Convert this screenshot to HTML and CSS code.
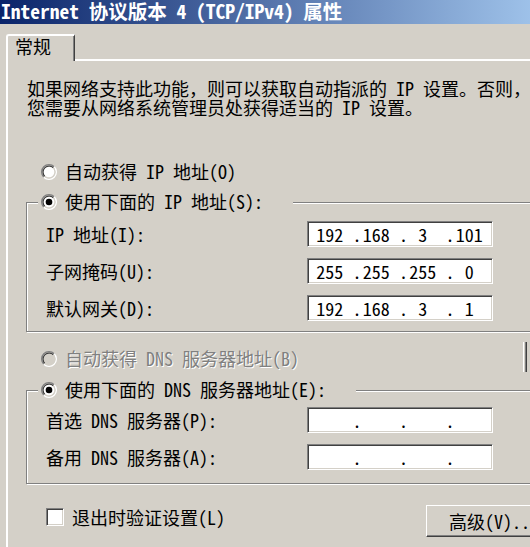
FILE: index.html
```html
<!DOCTYPE html>
<html lang="zh-CN">
<head>
<meta charset="utf-8">
<title>Internet 协议版本 4 (TCP/IPv4) 属性</title>
<link rel="stylesheet" href="styles.css">
</head>
<body>
<div class="window">
  <div class="titlebar"><span class="title">Internet 协议版本 4 (TCP/IPv4) 属性</span></div>
  <div class="tabstrip">
    <div class="tab">常规</div>
    <div class="tab-fill"></div>
  </div>
  <div class="panel">
    <p class="intro">如果网络支持此功能，则可以获取自动指派的 IP 设置。否则，<br>您需要从网络系统管理员处获得适当的 IP 设置。</p>

    <div class="option">
      <svg class="radio" viewBox="0 0 12 12"><path d="M2.11 9.89A5.5 5.5 0 0 1 9.89 2.11" stroke="#808080" fill="none"/><path d="M9.89 2.11A5.5 5.5 0 0 1 2.11 9.89" stroke="#fff" fill="none"/><path d="M2.82 9.18A4.5 4.5 0 0 1 9.18 2.82" stroke="#404040" fill="none"/><path d="M9.18 2.82A4.5 4.5 0 0 1 2.82 9.18" stroke="#d4d0c8" fill="none"/><circle cx="6" cy="6" r="4" fill="#fff"/></svg>
      <span class="label">自动获得 IP 地址(O)</span>
    </div>

    <div class="group group-ip">
      <div class="legend">
        <svg class="radio" viewBox="0 0 12 12"><path d="M2.11 9.89A5.5 5.5 0 0 1 9.89 2.11" stroke="#808080" fill="none"/><path d="M9.89 2.11A5.5 5.5 0 0 1 2.11 9.89" stroke="#fff" fill="none"/><path d="M2.82 9.18A4.5 4.5 0 0 1 9.18 2.82" stroke="#404040" fill="none"/><path d="M9.18 2.82A4.5 4.5 0 0 1 2.82 9.18" stroke="#d4d0c8" fill="none"/><circle cx="6" cy="6" r="4" fill="#fff"/><circle cx="6" cy="6" r="2.5" fill="#000"/></svg>
        <span class="label">使用下面的 IP 地址(S):</span>
      </div>
      <div class="rows rows-ip">
        <div class="field-row">
          <span class="field-label">IP 地址(I):</span>
          <div class="ip"><span class="oct">192</span><span class="dot">.</span><span class="oct">168</span><span class="dot">.</span><span class="oct">3</span><span class="dot">.</span><span class="oct">101</span></div>
        </div>
        <div class="field-row">
          <span class="field-label">子网掩码(U):</span>
          <div class="ip"><span class="oct">255</span><span class="dot">.</span><span class="oct">255</span><span class="dot">.</span><span class="oct">255</span><span class="dot">.</span><span class="oct">0</span></div>
        </div>
        <div class="field-row">
          <span class="field-label">默认网关(D):</span>
          <div class="ip"><span class="oct">192</span><span class="dot">.</span><span class="oct">168</span><span class="dot">.</span><span class="oct">3</span><span class="dot">.</span><span class="oct">1</span></div>
        </div>
      </div>
    </div>

    <div class="option option-disabled">
      <svg class="radio" viewBox="0 0 12 12"><path d="M2.11 9.89A5.5 5.5 0 0 1 9.89 2.11" stroke="#808080" fill="none"/><path d="M9.89 2.11A5.5 5.5 0 0 1 2.11 9.89" stroke="#fff" fill="none"/><path d="M2.82 9.18A4.5 4.5 0 0 1 9.18 2.82" stroke="#404040" fill="none"/><path d="M9.18 2.82A4.5 4.5 0 0 1 2.82 9.18" stroke="#d4d0c8" fill="none"/><circle cx="6" cy="6" r="4" fill="#d4d0c8"/></svg>
      <span class="label">自动获得 DNS 服务器地址(B)</span>
      <span class="edge"></span>
    </div>

    <div class="group group-dns">
      <div class="legend">
        <svg class="radio" viewBox="0 0 12 12"><path d="M2.11 9.89A5.5 5.5 0 0 1 9.89 2.11" stroke="#808080" fill="none"/><path d="M9.89 2.11A5.5 5.5 0 0 1 2.11 9.89" stroke="#fff" fill="none"/><path d="M2.82 9.18A4.5 4.5 0 0 1 9.18 2.82" stroke="#404040" fill="none"/><path d="M9.18 2.82A4.5 4.5 0 0 1 2.82 9.18" stroke="#d4d0c8" fill="none"/><circle cx="6" cy="6" r="4" fill="#fff"/><circle cx="6" cy="6" r="2.5" fill="#000"/></svg>
        <span class="label">使用下面的 DNS 服务器地址(E):</span>
      </div>
      <div class="rows rows-dns">
        <div class="field-row">
          <span class="field-label">首选 DNS 服务器(P):</span>
          <div class="ip"><span class="oct"></span><span class="dot">.</span><span class="oct"></span><span class="dot">.</span><span class="oct"></span><span class="dot">.</span><span class="oct"></span></div>
        </div>
        <div class="field-row">
          <span class="field-label">备用 DNS 服务器(A):</span>
          <div class="ip"><span class="oct"></span><span class="dot">.</span><span class="oct"></span><span class="dot">.</span><span class="oct"></span><span class="dot">.</span><span class="oct"></span></div>
        </div>
      </div>
    </div>

    <div class="footer">
      <span class="check"></span>
      <span class="check-label">退出时验证设置(L)</span>
      <div class="button">高级(V)...</div>
    </div>
  </div>
</div>
</body>
</html>
```

FILE: styles.css
```css
html, body {
  margin: 0;
  padding: 0;
}
body {
  width: 530px;
  height: 547px;
  overflow: hidden;
  background: #d4d0c8;
  color: #000;
  font-family: "Noto Sans Mono CJK SC", "Noto Sans CJK SC", "Liberation Mono", monospace;
  font-size: 18px;
}
.window {
  width: 560px;
  height: 547px;
  background: #d4d0c8;
}
.titlebar {
  height: 24px;
  background: linear-gradient(to right, #0a246a 0, #a6caf0 560px);
  overflow: hidden;
}
.title {
  display: block;
  padding-left: 1px;
  line-height: 22px;
  font-size: 19.5px;
  font-weight: bold;
  color: #fff;
  white-space: nowrap;
}
.tabstrip {
  display: flex;
  align-items: flex-end;
  margin-top: 10px;
  padding-left: 6px;
  height: 27px;
}
.tab {
  box-sizing: border-box;
  width: 69px;
  height: 27px;
  border-top: 2px solid #fff;
  border-left: 2px solid #fff;
  border-right: 1px solid #404040;
  border-top-left-radius: 3px;
  box-shadow: inset -1px 0 0 #808080;
  padding-left: 7px;
  line-height: 20px;
}
.tab-fill {
  flex: 1;
  height: 2px;
  background: #fff;
}
.panel {
  margin-left: 6px;
  height: 486px;
  border-left: 2px solid #fff;
  overflow: hidden;
}
.intro {
  margin: 18px 0 0 19px;
  line-height: 19px;
  white-space: nowrap;
}
.option {
  display: flex;
  align-items: center;
  height: 19px;
  margin-top: 45px;
  margin-left: 33px;
  white-space: nowrap;
}
.radio {
  width: 16px;
  height: 16px;
  flex: none;
}
.label {
  margin-left: 8px;
  line-height: 19px;
}
.option-disabled {
  width: 486px;
  margin-top: 17px;
}
.option-disabled .label {
  color: #808080;
  text-shadow: 1px 1px 0 #fff;
}
.edge {
  box-sizing: border-box;
  width: 4px;
  height: 30px;
  margin: -8px 0 -4px auto;
  border-left: 1px solid #fff;
  border-right: 1px solid #404040;
  box-shadow: inset -1px 0 0 #808080;
}
.group {
  width: 540px;
  margin-left: 18px;
  border: 1px solid #808080;
  box-shadow: inset 1px 1px 0 #fff, 1px 1px 0 #fff;
}
.group-ip {
  margin-top: 21px;
  padding-bottom: 10px;
}
.group-dns {
  margin-top: 22px;
  padding-bottom: 13px;
}
.legend {
  display: flex;
  align-items: center;
  width: fit-content;
  height: 19px;
  margin: -11px 0 0 11px;
  padding: 0 30px 0 3px;
  background: #d4d0c8;
  white-space: nowrap;
}
.rows {
  display: flex;
  flex-direction: column;
  gap: 11px;
}
.rows-ip {
  margin-top: 10px;
}
.rows-dns {
  margin-top: 8px;
}
.field-row {
  display: flex;
  align-items: center;
  height: 26px;
  padding-left: 19px;
  white-space: nowrap;
}
.field-label {
  width: 261px;
  line-height: 19px;
}
.ip {
  box-sizing: border-box;
  display: flex;
  width: 186px;
  height: 26px;
  padding-left: 7px;
  background: #fff;
  border: 1px solid;
  border-color: #808080 #fff #fff #808080;
  box-shadow: inset 1px 1px 0 #404040, inset -1px -1px 0 #d4d0c8;
  line-height: 24px;
}
.oct {
  box-sizing: border-box;
  width: 38px;
  padding-right: 8px;
  text-align: center;
}
.dot {
  width: 9px;
  text-align: center;
}
.footer {
  display: flex;
  align-items: flex-start;
  width: 538px;
  margin-top: 21px;
  white-space: nowrap;
}
.check {
  box-sizing: border-box;
  width: 18px;
  height: 18px;
  margin: 3px 0 0 38px;
  background: #fff;
  border: 1px solid;
  border-color: #808080 #fff #fff #808080;
  box-shadow: inset 1px 1px 0 #404040, inset -1px -1px 0 #d4d0c8;
}
.check-label {
  margin: 3px 0 0 8px;
  line-height: 19px;
}
.button {
  box-sizing: border-box;
  width: 120px;
  height: 32px;
  margin-left: auto;
  padding-left: 22px;
  border: 1px solid;
  border-color: #fff #404040 #404040 #fff;
  box-shadow: inset -1px -1px 0 #808080;
  line-height: 30px;
}
```
